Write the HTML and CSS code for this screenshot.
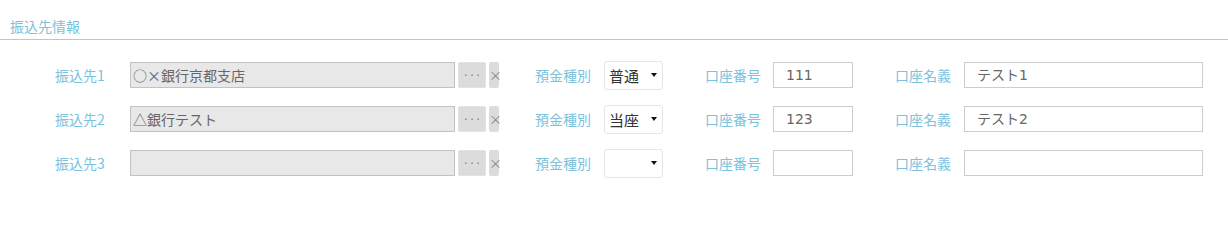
FILE: index.html
```html
<!DOCTYPE html>
<html lang="ja">
<head>
<meta charset="utf-8">
<link rel="stylesheet" href="styles.css">
</head>
<body>
<section class="panel">
  <h2 class="panel-title">振込先情報</h2>
  <div class="rows">
    <div class="row">
      <span class="lbl lbl-dest">振込先1</span>
      <div class="field field-bank">○×銀行京都支店</div>
      <span class="btn-more">···</span>
      <span class="btn-clear">×</span>
      <span class="lbl lbl-type">預金種別</span>
      <div class="select"><span class="select-val">普通</span><span class="caret"></span></div>
      <span class="lbl lbl-num">口座番号</span>
      <div class="field field-num">111</div>
      <span class="lbl lbl-name">口座名義</span>
      <div class="field field-name">テスト1</div>
    </div>
    <div class="row">
      <span class="lbl lbl-dest">振込先2</span>
      <div class="field field-bank">△銀行テスト</div>
      <span class="btn-more">···</span>
      <span class="btn-clear">×</span>
      <span class="lbl lbl-type">預金種別</span>
      <div class="select"><span class="select-val">当座</span><span class="caret"></span></div>
      <span class="lbl lbl-num">口座番号</span>
      <div class="field field-num">123</div>
      <span class="lbl lbl-name">口座名義</span>
      <div class="field field-name">テスト2</div>
    </div>
    <div class="row">
      <span class="lbl lbl-dest">振込先3</span>
      <div class="field field-bank"></div>
      <span class="btn-more">···</span>
      <span class="btn-clear">×</span>
      <span class="lbl lbl-type">預金種別</span>
      <div class="select"><span class="select-val"></span><span class="caret"></span></div>
      <span class="lbl lbl-num">口座番号</span>
      <div class="field field-num"></div>
      <span class="lbl lbl-name">口座名義</span>
      <div class="field field-name"></div>
    </div>
  </div>
</section>
</body>
</html>
```

FILE: styles.css
```css
html, body {
  margin: 0;
  padding: 0;
  background: #ffffff;
}

body {
  font-family: "Noto Sans CJK JP", "Noto Sans", sans-serif;
  font-size: 14px;
  color: #555555;
}

.panel {
  width: 1228px;
}

.panel-title {
  margin: 0;
  padding: 17px 10px 3px;
  font-size: 14px;
  font-weight: normal;
  line-height: 19px;
  color: #7cc2dc;
  border-bottom: 1px solid #c4c4c4;
}

.rows {
  display: flex;
  flex-direction: column;
  gap: 14px;
  padding: 20px 0 0 55px;
}

.row {
  display: flex;
  align-items: center;
  height: 30px;
}

.lbl {
  color: #7cc2dc;
  font-size: 14px;
  line-height: 20px;
  white-space: nowrap;
}

.lbl-dest { width: 75px; }
.lbl-type { width: 69px; margin-left: 36px; }
.lbl-num  { width: 68px; margin-left: 42px; }
.lbl-name { width: 69px; margin-left: 42px; }

.field {
  box-sizing: border-box;
  height: 26px;
  border: 1px solid #cccccc;
  background: #ffffff;
  color: #666666;
  font-size: 14px;
  line-height: 24px;
  white-space: nowrap;
  overflow: hidden;
}

.field-bank {
  width: 325px;
  background: #e8e8e8;
  border-color: #c2c2c2;
  padding-left: 2px;
}

.field-num {
  width: 80px;
  padding-left: 12px;
  font-family: "DejaVu Sans", "Noto Sans CJK JP", sans-serif;
}

.field-name {
  width: 239px;
  padding-left: 12px;
  font-family: "DejaVu Sans", "Noto Sans CJK JP", sans-serif;
}

.btn-more {
  box-sizing: border-box;
  width: 28px;
  height: 26px;
  margin-left: 3px;
  background: #dcdcdc;
  border: 1px solid #e2e2e2;
  border-radius: 2px;
  color: #777777;
  font-size: 11px;
  line-height: 22px;
  text-align: center;
}

.btn-clear {
  box-sizing: border-box;
  width: 10px;
  height: 26px;
  margin-left: 3px;
  background: #dcdcdc;
  border-radius: 2px;
  color: #888888;
  font-size: 13px;
  line-height: 25px;
  text-align: center;
}

.select {
  box-sizing: border-box;
  width: 59px;
  height: 29px;
  display: flex;
  align-items: center;
  justify-content: space-between;
  padding: 0 5px 0 4px;
  border: 1px solid #e4e6ea;
  border-radius: 3px;
  background: #ffffff;
  color: #333333;
  font-size: 15px;
}

.caret {
  width: 0;
  height: 0;
  border-left: 3px solid transparent;
  border-right: 3px solid transparent;
  border-top: 4px solid #111111;
}
```
